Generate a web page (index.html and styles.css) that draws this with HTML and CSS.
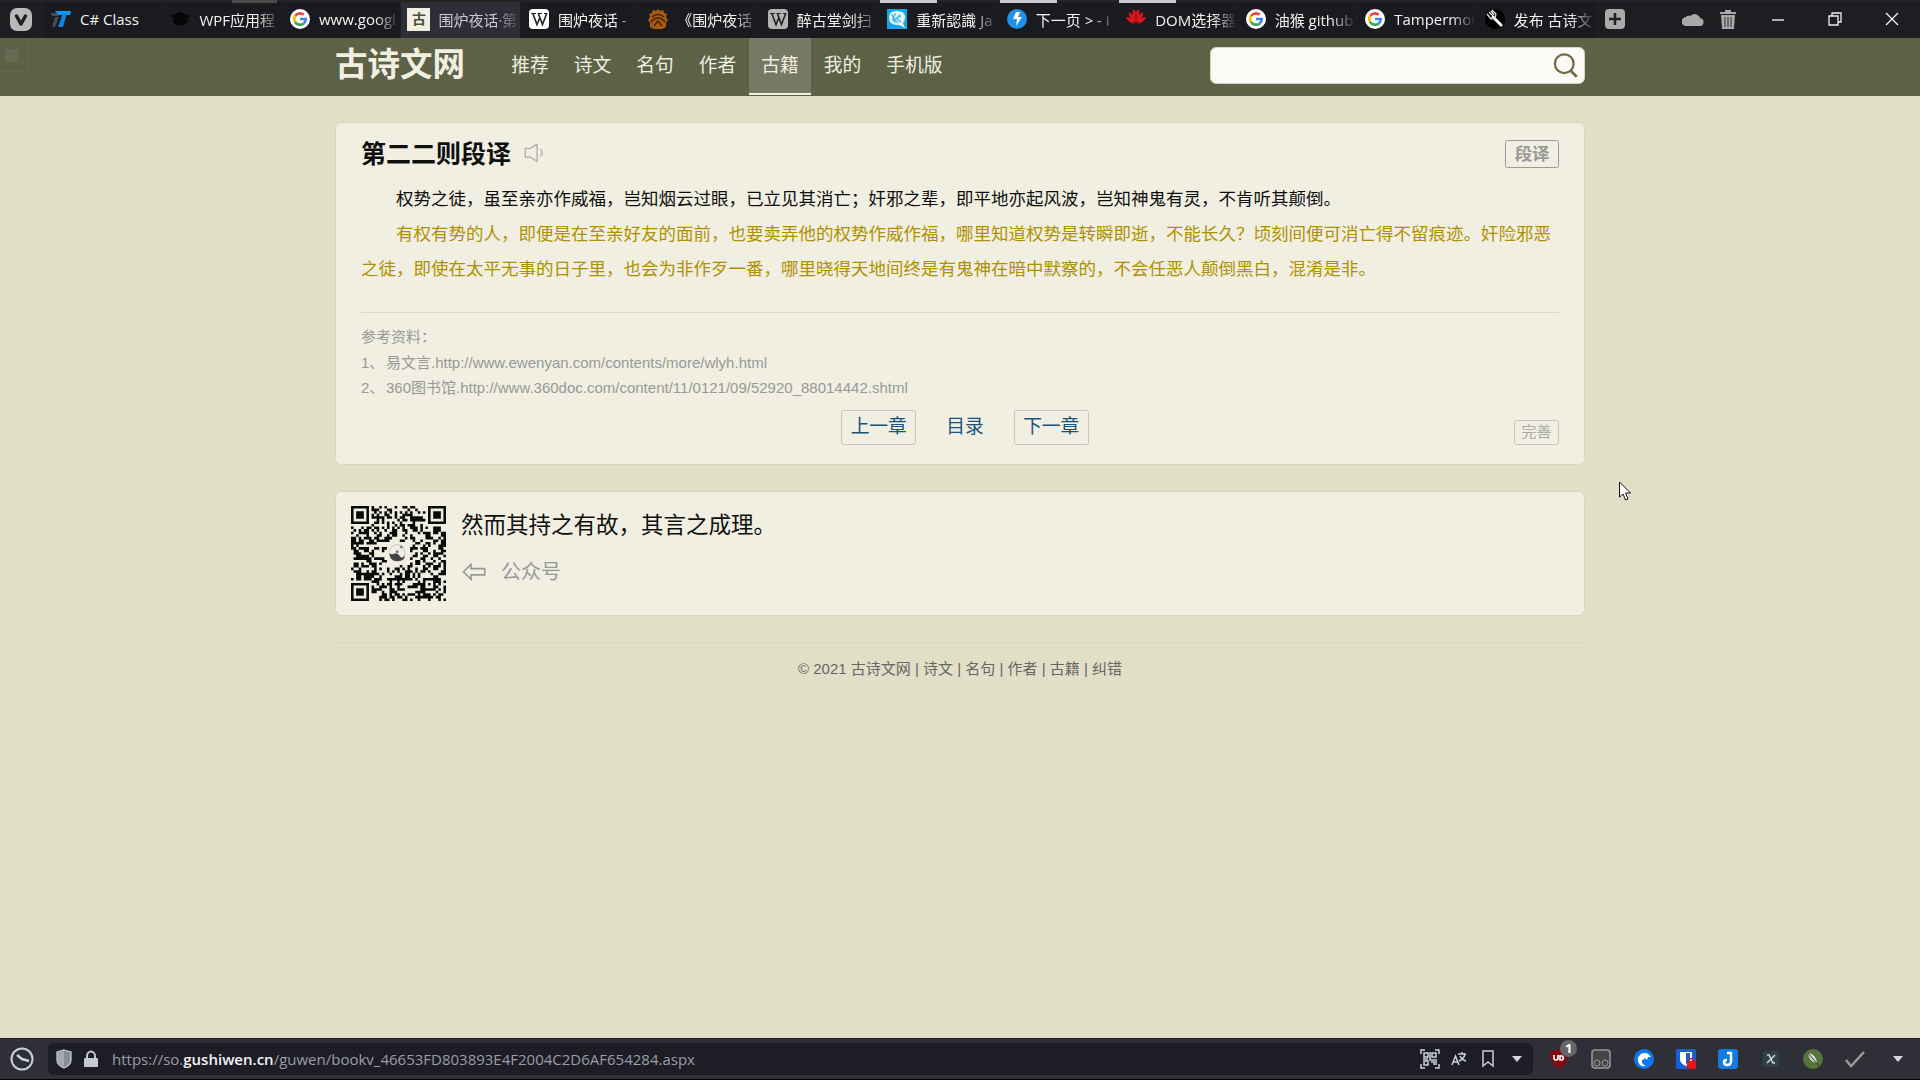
FILE: index.html
```html
<!DOCTYPE html>
<html lang="zh-CN">
<head>
    <meta charset="UTF-8">
    <meta name="viewport" content="width=device-width, initial-scale=1.0">
    <title>围炉夜话·第二二则段译_古诗文网</title>
    <link rel="stylesheet" href="styles.css">
</head>
<body>
    <!-- shared symbols -->
    <svg class="sprite" aria-hidden="true">
        <symbol id="google" viewBox="0 0 20 20">
            <circle cx="10" cy="10" r="10" fill="#fff"/>
            <path d="M5.2 6.8A5.8 5.8 0 0 1 13.7 5.8" fill="none" stroke="#ea4335" stroke-width="2.6"/>
            <path d="M5.1 13A5.8 5.8 0 0 1 5.2 6.8" fill="none" stroke="#fbbc05" stroke-width="2.6"/>
            <path d="M5 12.8A5.8 5.8 0 0 0 13.7 14.4" fill="none" stroke="#34a853" stroke-width="2.6"/>
            <path d="M10 10h5.8a5.8 5.8 0 0 1-2.2 4.5" fill="none" stroke="#4285f4" stroke-width="2.6"/>
        </symbol>
        <symbol id="wiki" viewBox="0 0 20 20">
            <path d="M2 4.5h5M8.5 4.5h4.500M15 4.5h3.500" stroke="#222" stroke-width="1"/>
            <path d="M4 5l4 10.500 3-7M9.500 5l4 10.500L17.500 5" fill="none" stroke="#222" stroke-width="1.600"/>
        </symbol>
        <symbol id="caret" viewBox="0 0 10 6"><path d="M0 0h10L5 6z" fill="currentColor"/></symbol>
    </svg>

    <header class="tabbar">
        <button class="menu" aria-label="Vivaldi">
            <svg width="24" height="24" viewBox="0 0 24 24"><rect x="1" y="0" width="22" height="23" rx="7" fill="#b9b9b9"/><path d="M7.500 8l4.500 8 4.500-8" fill="none" stroke="#1f2023" stroke-width="3.500" stroke-linecap="round" stroke-linejoin="round"/></svg>
        </button>
        <nav class="tabs">
            <button class="tab">
                <svg class="fav" viewBox="0 0 20 20"><path d="M4 2h16l-1 4H7z" fill="#1496f0"/><path d="M12 4h4l-4 14H7z" fill="#1283dc"/><path d="M0 4h5l3 3H1zM4 8h4L4 18H1z" fill="#4a4b50"/></svg>
                <span>C# Class</span>
            </button>
            <button class="tab marked-dim">
                <svg class="fav" viewBox="0 0 20 20"><path d="M0 7l10-4 10 4-10 4z" fill="#050505"/><path d="M4 9v5q6 4 12 0V9l-6 3zM18 8v6" fill="#050505" stroke="#050505"/></svg>
                <span>WPF应用程</span>
            </button>
            <button class="tab"><svg class="fav"><use href="#google"/></svg><span>www.googl</span></button>
            <button class="tab active"><i class="fav fav-gu">古</i><span>围炉夜话·第</span></button>
            <button class="tab"><svg class="fav fav-white"><use href="#wiki"/></svg><span>围炉夜话 -</span></button>
            <button class="tab">
                <svg class="fav" viewBox="0 0 20 20"><path d="M10 0l2 2 3-1 1 3 3 1-1 3 2 3-2 3v4l-4 2H6l-4-2v-4l-2-3 2-3-1-3 3-1 1-3 3 1z" fill="#a85a10"/><path d="M4 8q6-5 12 0M3 13q3-4 7-4t7 4M6 17l4-5 4 5" fill="none" stroke="#3a2408" stroke-width="1.500"/></svg>
                <span>《围炉夜话</span>
            </button>
            <button class="tab"><svg class="fav fav-gray"><use href="#wiki"/></svg><span>醉古堂剑扫</span></button>
            <button class="tab marked">
                <svg class="fav" viewBox="0 0 20 20"><path d="M0 0h20v20H0z" fill="#12a5e8"/><path d="M2 8q0-6 8-6t8 6q0 4-2 6l2 5-6-3Q2 17 2 8z" fill="#e4f6ff"/><path d="M5 5l3 9M9 4l-3 5 5 5M13 5l-3 5 4 3M5 11l9-4" stroke="#35b4ec" stroke-width="1.200" fill="none"/></svg>
                <span>重新認識 Ja</span>
            </button>
            <button class="tab marked">
                <svg class="fav" viewBox="0 0 20 20"><circle cx="10" cy="10" r="10" fill="#1e90ee"/><path d="M9 3h4l-2 5h4l-6 9 1-7H6z" fill="#fff"/></svg>
                <span>下一页 &gt; - i</span>
            </button>
            <button class="tab marked">
                <svg class="fav" viewBox="0 0 20 20"><path d="M9.500 14Q4 4 8 0q4 5 1.500 14zM10.500 14Q16 4 12 0q-4 5-1.500 14zM8.500 14Q2 9 3 3q6 3 5.500 11zM11.500 14Q18 9 17 3q-6 3-5.500 11zM8 15Q1 13 0 8q6 0 8 7zM12 15q7-2 8-7-6 0-8 7z" fill="#d8141c"/></svg>
                <span>DOM选择器</span>
            </button>
            <button class="tab"><svg class="fav"><use href="#google"/></svg><span>油猴 github</span></button>
            <button class="tab"><svg class="fav"><use href="#google"/></svg><span>Tampermon</span></button>
            <button class="tab">
                <svg class="fav" viewBox="0 0 20 20"><circle cx="10" cy="10" r="10" fill="#000"/><path d="M8 8l8 8" stroke="#fff" stroke-width="3" stroke-linecap="round"/><path d="M2 5l4 5 4-1 1-4-4-4M4 3l4 4M6 2l3 4" fill="none" stroke="#ddd" stroke-width="1.300"/></svg>
                <span>发布 古诗文</span>
            </button>
        </nav>
        <div class="window-tools">
            <button class="plus" aria-label="新标签页"><svg width="20" height="20" viewBox="0 0 20 20"><rect width="20" height="20" rx="4" fill="#aaa"/><path d="M10 4v12M4 10h12" stroke="#1d1e22" stroke-width="2.500"/></svg></button>
            <button class="cloud" aria-label="同步"><svg width="22" height="14" viewBox="0 0 22 14"><path d="M5 14a5 4.500 0 0 1-1-9 3 3 0 0 1 4-1 6 6 0 0 1 10 2 4 4 0 0 1-1 8z" fill="#a9a9a9"/></svg></button>
            <button class="trash" aria-label="已关闭标签页"><svg width="18" height="20" viewBox="0 0 18 20"><path d="M1 3h5V1h6v2h5v2H1zM2 6h14l-1 14H3z" fill="#a9a9a9"/><path d="M6 8v10M9 8v10M12 8v10" stroke="#333"/></svg></button>
            <button class="win" aria-label="最小化"><svg width="14" height="14" viewBox="0 0 14 14"><path d="M1 8h12" stroke="#ddd" stroke-width="1.500"/></svg></button>
            <button class="win" aria-label="还原"><svg width="14" height="14" viewBox="0 0 14 14" fill="none" stroke="#eee" stroke-width="1.300"><path d="M1 4h9v9H1zM4 4V1h9v9h-3"/></svg></button>
            <button class="win" aria-label="关闭"><svg width="14" height="14" viewBox="0 0 14 14"><path d="M1 1l12 12M13 1L1 13" stroke="#eee" stroke-width="1.400"/></svg></button>
        </div>
    </header>

    <div class="page">
        <div class="site-header">
            <div class="wrap header-row">
                <a class="logo" href="#">古诗文网</a>
                <nav class="site-nav">
                    <a href="#">推荐</a>
                    <a href="#">诗文</a>
                    <a href="#">名句</a>
                    <a href="#">作者</a>
                    <a class="current" href="#">古籍</a>
                    <a href="#">我的</a>
                    <a href="#">手机版</a>
                </nav>
                <form class="search">
                    <input type="text" aria-label="搜索">
                    <button type="button" aria-label="搜索">
                        <svg width="20" height="20" viewBox="0 0 20 20" fill="none" stroke="#6c6c45" stroke-width="1.800"><circle cx="9" cy="8.500" r="7.500"/><path d="M14 14l5 5" stroke-width="2.200"/></svg>
                    </button>
                </form>
            </div>
        </div>

        <main class="wrap">
            <article class="card chapter">
                <div class="title-row">
                    <h1>第二二则段译</h1>
                    <button class="speak" aria-label="朗读">
                        <svg width="16" height="16" viewBox="0 0 16 16" fill="none" stroke="#b5b5ae" stroke-width="1.200"><path d="M1 3.500h4L10.500 0v14L5 10.500H1zM13 4q3 3 0 6"/></svg>
                    </button>
                    <button class="tag">段译</button>
                </div>
                <div class="text">
                    <p>权势之徒，虽至亲亦作威福，岂知烟云过眼，已立见其消亡；奸邪之辈，即平地亦起风波，岂知神鬼有灵，不肯听其颠倒。</p>
                    <p class="translation">有权有势的人，即便是在至亲好友的面前，也要卖弄他的权势作威作福，哪里知道权势是转瞬即逝，不能长久？顷刻间便可消亡得不留痕迹。奸险邪恶之徒，即使在太平无事的日子里，也会为非作歹一番，哪里晓得天地间终是有鬼神在暗中默察的，不会任恶人颠倒黑白，混淆是非。</p>
                </div>
                <div class="refs">
                    <p class="refs-title">参考资料：</p>
                    <p><span class="num">1、</span>易文言.http://www.ewenyan.com/contents/more/wlyh.html</p>
                    <p><span class="num">2、</span>360图书馆.http://www.360doc.com/content/11/0121/09/52920_88014442.shtml</p>
                </div>
                <div class="card-foot">
                    <div class="pager">
                        <a class="boxed" href="#">上一章</a>
                        <a href="#">目录</a>
                        <a class="boxed" href="#">下一章</a>
                    </div>
                    <a class="improve" href="#">完善</a>
                </div>
            </article>

            <section class="card follow">
                <svg class="qr" id="qr" viewBox="0 0 37 37" role="img" aria-label="公众号二维码"></svg>
                <div>
                    <p class="quote">然而其持之有故，其言之成理。</p>
                    <p class="account">
                        <svg width="20" height="14" viewBox="0 0 20 14" fill="none" stroke="#999" stroke-width="1.300"><path d="M2 7l6-6v3.500h11v5H8V13z"/></svg>
                        <span>公众号</span>
                    </p>
                </div>
            </section>

            <footer class="site-footer">
                © 2021 <a href="#">古诗文网</a> | <a href="#">诗文</a> | <a href="#">名句</a> | <a href="#">作者</a> | <a href="#">古籍</a> | <a href="#">纠错</a>
            </footer>
        </main>
    </div>

    <div class="statusbar">
        <button class="clock" aria-label="历史"><svg width="24" height="24" viewBox="0 0 24 24" fill="none" stroke="#ccd0da" stroke-width="2"><circle cx="12" cy="12" r="10.500"/><path d="M7 8l5 4 7 2" stroke-width="2.500"/></svg></button>
        <div class="address">
            <svg width="18" height="20" viewBox="0 0 18 20"><path d="M9 1l7 2v8q0 5-7 8-7-3-7-8V3z" fill="#888b96" stroke="#c6c9d2" stroke-width="1.300"/><path d="M9 2v16q-6-3-6-7V4z" fill="#a6a9b3"/></svg>
            <svg width="14" height="18" viewBox="0 0 14 18"><path d="M3 9V6a4 4.500 0 0 1 8 0v3" fill="none" stroke="#c4c6d4" stroke-width="2"/><rect y="8" width="14" height="9" rx="1" fill="#c4c6d4"/></svg>
            <div class="url" role="textbox" aria-label="地址" contenteditable="true" spellcheck="false">https://so.<b>gushiwen.cn</b>/guwen/bookv_46653FD803893E4F2004C2D6AF654284.aspx</div>
            <div class="address-tools">
                <button aria-label="二维码"><svg width="20" height="20" viewBox="0 0 20 20" fill="none" stroke="#ccd0da" stroke-width="1.500"><path d="M1 5V1h4M15 1h4v4M19 15v4h-4M5 19H1v-4M4 4h4v4H4zM12 4h4v4h-4zM4 12h4v4H4zM10 3v8h7M11 13h3v3M16 12v4M3 10h5"/></svg></button>
                <button aria-label="翻译"><svg width="16" height="16" viewBox="0 0 16 16" fill="none" stroke="#ccd0da" stroke-width="1.500"><path d="M1 14l3.500-9L8 14M2 11h5M7 3h8M11 1v2M8 10q5-2 6-7M9 5q2 4 6 5"/></svg></button>
                <button aria-label="书签"><svg width="12" height="18" viewBox="0 0 12 18" fill="none" stroke="#ccd0da" stroke-width="1.500"><path d="M1 1h10v15l-5-4-5 4z"/></svg></button>
                <button aria-label="下拉"><svg class="caret"><use href="#caret"/></svg></button>
            </div>
        </div>
        <div class="extensions">
            <button aria-label="uBlock"><svg width="20" height="20" viewBox="0 0 20 20"><path d="M10 0q4 2 9 2 0 14-9 18Q1 16 1 2q5 0 9-2z" fill="#840812"/><path d="M5 6v3q0 2 2 2t2-2V6M11 6v5h2q3-2 0-4h-2" fill="none" stroke="#fff" stroke-width="1.600"/></svg><span class="badge">1</span></button>
            <button aria-label="Tampermonkey"><svg width="20" height="20" viewBox="0 0 20 20" fill="none" stroke="#999"><rect x="1" y="1" width="18" height="18" rx="3" fill="#454545" stroke-width="1.500"/><circle cx="6" cy="14" r="3"/><circle cx="14" cy="14" r="3"/></svg></button>
            <button aria-label="扩展"><svg width="20" height="20" viewBox="0 0 20 20"><circle cx="10" cy="10" r="10" fill="#0d78ef"/><path d="M17 8Q13 2 7 5q-6 5-1 11 3 2 6 1-5-2-4-6 2 0 3-2l2 2 1-3z" fill="#fff"/></svg></button>
            <button aria-label="Bitwarden"><svg width="20" height="20" viewBox="0 0 20 20"><rect width="20" height="20" rx="2" fill="#175ddc"/><path d="M4 3h12v8q-1 4-6 6-5-2-6-6z" fill="#fff"/><path d="M10 4h4v6q-1 4-4 5z" fill="#175ddc"/><rect x="11" y="12" width="9" height="8" rx="1" fill="#e3151c"/><path d="M13 12v-1q2-3 5 0v1" fill="none" stroke="#e3151c" stroke-width="1.500"/></svg></button>
            <button aria-label="JOP"><svg width="20" height="20" viewBox="0 0 20 20"><rect width="20" height="20" rx="3" fill="#117be0"/><path d="M9 4h4v8q0 4-4 4-3 0-3-3 0-2 3-2" fill="none" stroke="#fff" stroke-width="2.500"/></svg></button>
            <button aria-label="XPath"><svg width="16" height="16" viewBox="0 0 16 16"><rect width="16" height="16" rx="2" fill="#30434b"/><path d="M4 4h2l4 8h2M12 4L4 12" fill="none" stroke="#cfd6d8" stroke-width="1.500"/></svg></button>
            <button aria-label="羽毛笔"><svg width="20" height="20" viewBox="0 0 20 20"><circle cx="10" cy="10" r="10" fill="#55753a"/><path d="M5 4q8 1 9 10Q6 13 5 4z" fill="#dedfd4"/><path d="M5 4l11 13" stroke="#333"/></svg></button>
            <button aria-label="完成"><svg width="20" height="18" viewBox="0 0 20 18"><path d="M1 10l5 6L19 2" fill="none" stroke="#999" stroke-width="2.500"/></svg></button>
            <button aria-label="更多"><svg class="caret"><use href="#caret"/></svg></button>
        </div>
    </div>

    <div class="ghost"></div>
    <svg class="cursor" width="12" height="20" viewBox="0 0 12 20" aria-hidden="true"><path d="M.5 1v15l3.500-3 2.500 6 2.500-1-2.500-6h5z" fill="#fff" stroke="#111"/></svg>

    <script src="qr.js"></script>
</body>
</html>
```
FILE: styles.css
```css
:root {
    --olive: #5d6146;
    --bg: #e1e0c7;
    --card: #f0efe2;
    --line: #d8d7bd;
    --link: #19537d;
    --site-font: "Liberation Sans", "Noto Sans CJK SC", sans-serif;
    --ui-font: "Open Sans", "Noto Sans CJK SC", sans-serif;
}

* {
    box-sizing: border-box;
}

body {
    margin: 0;
    height: 100vh;
    display: flex;
    flex-direction: column;
    background: var(--bg);
    font-family: var(--site-font);
    overflow: hidden;
}

h1, p {
    margin: 0;
}

a {
    color: inherit;
    text-decoration: none;
}

button {
    border: none;
    padding: 0;
    background: none;
    color: inherit;
    font: inherit;
    cursor: pointer;
}

svg {
    display: block;
}

.sprite {
    position: absolute;
    width: 0;
    height: 0;
}

/* tab bar */
.tabbar {
    flex: none;
    display: flex;
    height: 38px;
    background: #1d1e22;
    border-top: 2px solid #232423;
    font-family: var(--ui-font);
    font-size: 15px;
    color: #f2f2f2;
}

.menu {
    flex: none;
    width: 43px;
    padding-left: 9px;
}

.tabs {
    flex: 1;
    min-width: 0;
    display: flex;
    background: #1a1b1e;
}

.tab {
    flex: 1 1 0;
    min-width: 0;
    position: relative;
    display: flex;
    align-items: center;
    gap: 9px;
    padding: 0 0 2px 8px;
    border-right: 1px solid #1d1e22;
}

.tab span {
    flex: 1;
    overflow: hidden;
    white-space: nowrap;
    text-align: left;
    mask-image: linear-gradient(to right, #000 70%, transparent);
}

.tab:first-child span {
    mask-image: none;
}

.tab.active {
    background: #2e2e38;
    color: #c9c9d3;
}

.tab.marked::before,
.tab.marked-dim::before {
    content: "";
    position: absolute;
    top: -2px;
    left: 1px;
    width: 57px;
    height: 3px;
    background: #c8c8d2;
}

.tab.marked-dim::before {
    left: auto;
    right: 4px;
    width: 45px;
    background: #4b4b4b;
}

.fav {
    flex: none;
    width: 20px;
    height: 20px;
}

.fav-white {
    background: #fff;
    border-radius: 4px;
}

.fav-gray {
    background: #b4b4b4;
    border-radius: 4px;
}

.fav-gu {
    width: 23px;
    height: 23px;
    margin: 0 -1px 0 -2px;
    background: #f0efe2;
    color: #4c5038;
    font-size: 14px;
    font-style: normal;
    font-weight: bold;
    line-height: 22px;
    text-align: center;
}

.window-tools {
    flex: none;
    display: flex;
    align-items: center;
    padding-bottom: 2px;
}

.window-tools button {
    display: flex;
    justify-content: center;
}

.window-tools .plus {
    width: 38px;
}

.window-tools .cloud {
    width: 78px;
    padding-left: 40px;
}

.window-tools .trash {
    width: 32px;
    margin-right: 5px;
}

.window-tools .win {
    width: 57px;
}

/* site, shown at 125% */
.page {
    flex: 1;
    min-height: 0;
    zoom: 1.25;
    font-size: 14px;
    color: #0f0f0f;
}

.wrap {
    max-width: 1000px;
    margin: 0 auto;
}

.site-header {
    height: 46px;
    background: var(--olive);
}

.header-row {
    display: flex;
    align-items: flex-start;
    color: var(--card);
}

.logo {
    width: 131px;
    font-size: 26px;
    font-weight: bold;
    line-height: 44px;
}

.site-nav {
    flex: 1;
    display: flex;
    font-size: 15px;
    line-height: 44px;
}

.site-nav a {
    padding: 0 10px;
    border-bottom: 2px solid transparent;
}

.site-nav .current {
    background: #767963;
    border-bottom-color: var(--card);
}

.search {
    display: flex;
    align-items: center;
    width: 300px;
    height: 30px;
    margin-top: 7px;
    padding-right: 5px;
    background: #fbfaf6;
    border: 1px solid var(--line);
    border-radius: 5px;
}

.search input {
    flex: 1;
    min-width: 0;
    height: 28px;
    padding: 0 10px;
    border: none;
    outline: none;
    background: none;
    font-size: 14px;
}

.card {
    margin-top: 21px;
    background: var(--card);
    border: 1px solid var(--line);
    border-radius: 5px;
}

.chapter {
    padding: 13px 20px 15px;
}

.title-row {
    display: flex;
    align-items: center;
    height: 24px;
}

h1 {
    font-size: 20px;
    line-height: 24px;
}

.speak {
    margin-left: 10px;
}

.tag {
    width: 43px;
    height: 22px;
    margin-left: auto;
    border: 1px solid #999;
    border-radius: 2px;
    color: #999;
    font-size: 14px;
    font-weight: bold;
    line-height: 20px;
}

.text {
    margin-top: 10px;
    line-height: 28px;
}

.text p {
    text-indent: 2em;
}

.translation {
    color: #af9100;
}

.refs {
    margin-top: 20px;
    padding-top: 8px;
    border-top: 1px solid #dad9cb;
    color: #999;
    font-size: 12px;
    line-height: 20px;
}

.refs-title {
    line-height: 22px;
}

.num {
    display: inline-block;
    width: 20px;
}

.card-foot {
    display: grid;
    grid-template-columns: 1fr auto 1fr;
    align-items: end;
    margin-top: 8px;
}

.pager {
    grid-column: 2;
    display: flex;
    gap: 24px;
    margin-left: 8px;
    color: var(--link);
    font-size: 15px;
    line-height: 26px;
}

.pager a {
    padding-top: 1px;
}

.pager .boxed {
    width: 60px;
    height: 28px;
    padding-top: 0;
    border: 1px solid #c5c5c0;
    border-radius: 2px;
    text-align: center;
}

.improve {
    justify-self: end;
    width: 36px;
    height: 20px;
    border: 1px solid #c5c5c0;
    border-radius: 2px;
    color: #aaa;
    font-size: 12px;
    line-height: 18px;
    text-align: center;
}

.follow {
    display: flex;
    gap: 12px;
    padding: 11px 12px;
}

.qr {
    width: 76px;
    height: 76px;
}

.quote {
    font-size: 18px;
    line-height: 32px;
}

.account {
    display: flex;
    align-items: center;
    gap: 12px;
    margin-top: 7px;
    color: #999;
    font-size: 16px;
    line-height: 28px;
}

.site-footer {
    margin-top: 21px;
    padding-top: 10px;
    border-top: 1px solid var(--line);
    color: #666;
    font-size: 12px;
    line-height: 22px;
    text-align: center;
}

/* address bar */
.statusbar {
    flex: none;
    display: flex;
    align-items: center;
    height: 42px;
    background: #2e2f37;
    border-top: 1px solid #1b1c22;
    border-bottom: 1px solid #000;
    font-family: var(--ui-font);
}

.clock {
    width: 48px;
    padding-left: 10px;
}

.address {
    flex: 1;
    display: flex;
    align-items: center;
    height: 32px;
    padding-left: 7px;
    background: #1d1d26;
    border-radius: 6px;
}

.address > svg {
    margin-right: 11px;
}

.url {
    flex: 1;
    margin-left: 3px;
    outline: none;
    color: #9b9ca6;
    font-size: 15px;
    white-space: nowrap;
}

.url b {
    color: #f4f4f6;
    font-weight: 600;
}

.address-tools {
    display: flex;
    align-items: center;
    padding-right: 2px;
}

.address-tools button {
    width: 29px;
    display: flex;
    justify-content: center;
}

.caret {
    width: 10px;
    height: 6px;
    color: #d5d8df;
}

.extensions {
    flex: none;
    display: flex;
    width: 387px;
    padding: 0 1px 0 5px;
}

.extensions button {
    position: relative;
    flex: 1;
    display: flex;
    align-items: center;
    justify-content: center;
    height: 32px;
}

.badge {
    position: absolute;
    top: -3px;
    right: 3px;
    width: 17px;
    height: 17px;
    border-radius: 50%;
    background: #666;
    color: #fff;
    font-size: 13px;
    font-weight: bold;
    line-height: 17px;
    text-align: center;
}

/* overlays */
.ghost {
    position: absolute;
    top: 38px;
    left: 0;
    width: 29px;
    height: 34px;
    padding: 11px 10px 9px 5px;
    border: solid #64684d;
    border-width: 0 1px 1px 0;
    border-radius: 0 0 4px 0;
}

.ghost::before {
    content: "";
    display: block;
    width: 13px;
    height: 13px;
    background: #686b54;
}

.cursor {
    position: absolute;
    top: 481px;
    left: 1619px;
}
```
FILE: qr.js
```javascript
const SIZE = 37;
let seed = 46653;

function nextBit() {
    seed = (seed * 1103515245 + 12345) % 2147483648;
    return (seed >> 16) & 1;
}

// nested squares: the corner marks and the small alignment mark
function ring(x, y, cx, cy, radii) {
    const d = Math.max(Math.abs(x - cx), Math.abs(y - cy));
    return radii.includes(d);
}

function isDark(x, y) {
    const bit = nextBit();
    const corners = [[3, 3], [33, 3], [3, 33]];
    for (const [cx, cy] of corners) {
        if (Math.max(Math.abs(x - cx), Math.abs(y - cy)) <= 4) {
            return ring(x, y, cx, cy, [0, 1, 3]);
        }
    }
    if (Math.max(Math.abs(x - 30), Math.abs(y - 30)) <= 2) {
        return ring(x, y, 30, 30, [0, 2]);
    }
    if (Math.max(Math.abs(x - 18), Math.abs(y - 18)) <= 4) {
        return false;
    }
    return bit === 1;
}

let d = '';
for (let y = 0; y < SIZE; y++) {
    for (let x = 0; x < SIZE; x++) {
        if (isDark(x, y)) d += `M${x} ${y}h1v1h-1z`;
    }
}

document.getElementById('qr').innerHTML = `
    <path d="${d}" fill="#0a0a0a"/>
    <circle cx="18" cy="18" r="3" fill="none" stroke="#bbb" stroke-width=".3"/>
    <path d="M15 18.500q1 .5 2 0t2 1 2-.5q0 2.500-3 2.500t-3-3z" fill="#444"/>
    <circle cx="19.600" cy="16" r=".6" fill="#888"/>
    <circle cx="18" cy="17.800" r=".5" fill="#666"/>`;
```
